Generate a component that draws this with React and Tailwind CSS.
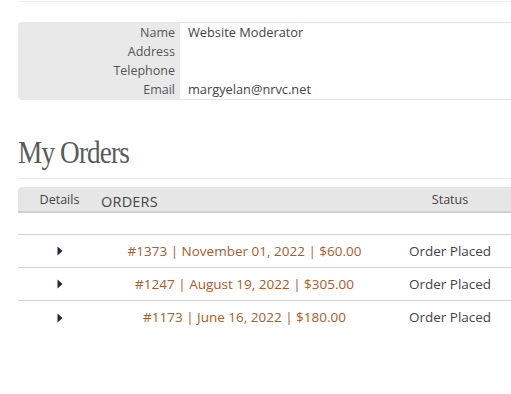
import { useState } from 'react';

const orders = [
  { id: 1373, date: 'November 01, 2022', total: '$60.00', status: 'Order Placed' },
  { id: 1247, date: 'August 19, 2022', total: '$305.00', status: 'Order Placed' },
  { id: 1173, date: 'June 16, 2022', total: '$180.00', status: 'Order Placed' },
];

const profile = [
  ['Name', 'Website Moderator'],
  ['Address', ''],
  ['Telephone', ''],
  ['Email', 'margyelan@nrvc.net'],
];

function Caret() {
  return (
    <svg width="6" height="10" viewBox="0 0 6 10" className="block">
      <path d="M0.5 0.5 L5.5 5 L0.5 9.5 Z" fill="#1d2a3b" />
    </svg>
  );
}

export default function App() {
  const [open, setOpen] = useState(null);

  return (
    <div className="w-[511px] h-[394px] overflow-hidden bg-white pl-[18px] font-['Open_Sans','Noto_Sans',sans-serif] text-[#444]">
      <div className="mt-px h-px bg-[#ececec]" />

      {/* account details */}
      <div className="mt-[20px] flex w-[520px] rounded-l-[4px] overflow-hidden">
        <div className="w-[162px] bg-[#e9e9e9] py-px">
          {profile.map(([label]) => (
            <div key={label} className="h-[19px] pr-[5px] text-right text-[12.5px] leading-[19px] text-[#555]">
              {label}
            </div>
          ))}
        </div>
        <div className="flex-1 border-y border-[#e4e4e4] pl-[8px]">
          {profile.map(([label, value]) => (
            <div key={label} className="h-[19px] text-[12.8px] leading-[19px] text-[#444]">
              {value}
            </div>
          ))}
        </div>
      </div>

      <h1 className="mt-[36px] h-[33px] font-['Liberation_Serif',serif] text-[31px] leading-[33px] tracking-[-1px] text-[#5a5a5a]">
        <span className="inline-block origin-left scale-x-[0.88]">My Orders</span>
      </h1>
      <div className="mt-[9px] h-px bg-[#ececec]" />

      {/* orders table */}
      <div className="mt-[8px] w-[520px]">
        <div className="flex h-[26px] items-center rounded-tl-[4px] border-b-2 border-[#cfcfcf] bg-[#e6e6e6] pt-[3px] text-[#444]">
          <div className="w-[83px] text-center text-[12.5px]">Details</div>
          <div className="w-[287px] pt-[2px] text-[14.5px] tracking-[0.2px]">ORDERS</div>
          <div className="w-[124px] text-center text-[12.5px]">Status</div>
        </div>
        <div className="h-[22px] border-b border-[#d4d4d4]" />
        {orders.map((o, i) => (
          <div
            key={o.id}
            onClick={() => setOpen(open === o.id ? null : o.id)}
            className={`flex h-[33px] items-center ${i < orders.length - 1 ? 'border-b border-[#d4d4d4]' : ''}`}
          >
            <div className="flex w-[83px] justify-center">
              <Caret />
            </div>
            <div className="w-[287px] text-center text-[13.5px] text-[#a85c2c]">
              #{o.id} | {o.date} | {o.total}
            </div>
            <div className="w-[124px] text-center text-[13.5px] text-[#444]">{o.status}</div>
          </div>
        ))}
      </div>
    </div>
  );
}
